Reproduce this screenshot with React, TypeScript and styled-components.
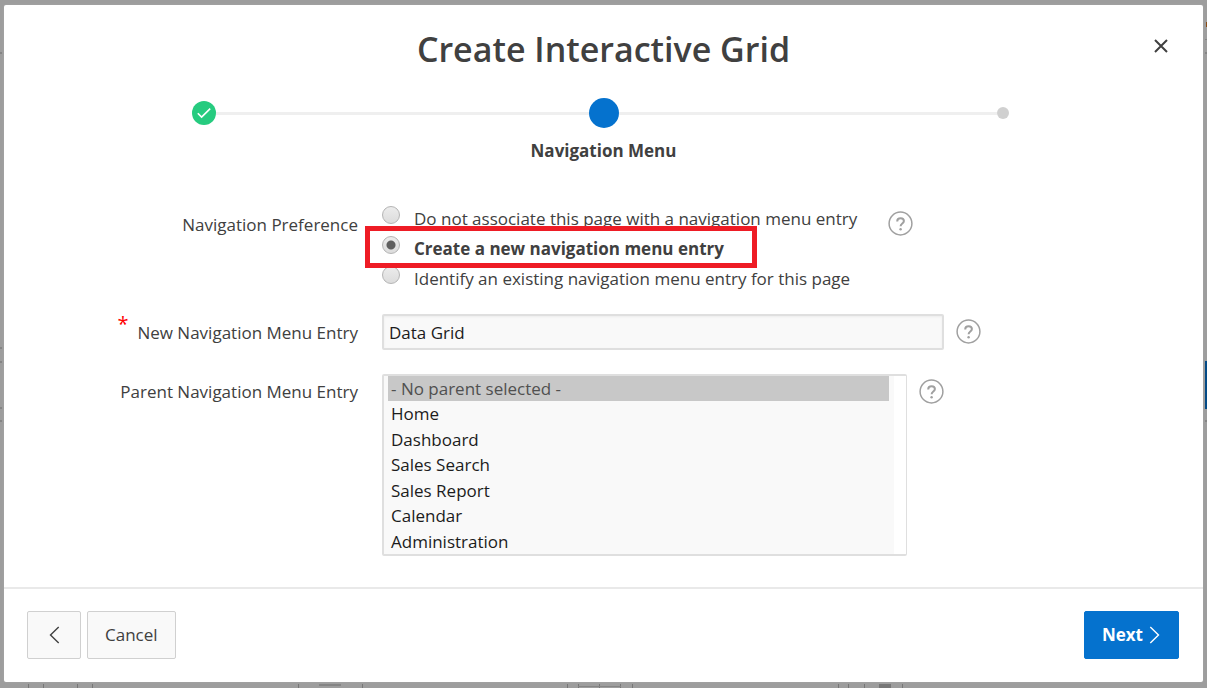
import React, { useState } from "react";
import styled, { createGlobalStyle, css } from "styled-components";

const GlobalStyle = createGlobalStyle`
  *, *::before, *::after { box-sizing: border-box; }
  body {
    margin: 0;
    background: #9d9d9d;
    color: #404040;
    font-family: "Open Sans", "Noto Sans", sans-serif;
    font-size: 17px;
    line-height: 24px;
  }
  button, input, select { font: inherit; color: inherit; }
`;

const Page = styled.div`
  position: relative;
  display: flex;
  min-height: 100vh;
  padding: 5px 4px 6px;
  overflow: hidden;
`;

const Mark = styled.span<{ $x: string; $y: string; $w: number; $h: number; $c?: string }>`
  position: absolute;
  ${(p) => p.$x};
  ${(p) => p.$y};
  width: ${(p) => p.$w}px;
  height: ${(p) => p.$h}px;
  background: ${(p) => p.$c ?? "#858585"};
`;

const Dialog = styled.section`
  position: relative;
  flex: 1;
  min-width: 0;
  display: flex;
  flex-direction: column;
  background: #fff;
  border-radius: 2px;
  box-shadow: 0 0 2px #aaa;
`;

const Header = styled.header`
  position: relative;
  padding: 20px 0 25px;
  text-align: center;
`;

const Title = styled.h1`
  margin: 0;
  font-size: 34px;
  line-height: 48px;
  font-weight: 600;
`;

const CloseButton = styled.button`
  position: absolute;
  top: 25px;
  right: 26px;
  width: 32px;
  height: 32px;
  padding: 0;
  display: grid;
  place-items: center;
  border: 0;
  background: none;
`;

const Steps = styled.ol`
  display: flex;
  margin: 0;
  padding: 0;
  list-style: none;
  text-align: center;
`;

const Step = styled.li`
  flex: 1;
`;

const Track = styled.div`
  display: flex;
  align-items: center;
  height: 30px;
  margin-bottom: 11px;
`;

const Line = styled.span<{ $hidden?: boolean }>`
  flex: 1;
  height: 3px;
  background: ${(p) => (p.$hidden ? "transparent" : "#efefef")};
`;

const dots = {
  done: css`width: 24px; height: 24px; background: #26cb7f;`,
  current: css`width: 30px; height: 30px; background: #0572ce;`,
  next: css`width: 12px; height: 12px; background: #d0d0d0;`,
};

const Dot = styled.span<{ $state: keyof typeof dots }>`
  display: grid;
  place-items: center;
  border-radius: 50%;
  ${(p) => dots[p.$state]}
`;

const StepName = styled.strong`
  display: block;
  font-weight: 700;
`;

const Form = styled.form`
  flex: 1;
  display: flex;
  flex-direction: column;
  gap: 24px;
  padding: 41px 24px 29px 0;
`;

const Field = styled.div`
  display: grid;
  grid-template-columns: minmax(0, 354px) minmax(0, 1fr);
  column-gap: 24px;
  align-items: start;
`;

const LabelCell = styled.div<{ $top?: number }>`
  padding-top: ${(p) => p.$top ?? 6}px;
  text-align: right;
`;

const Required = styled.span`
  position: relative;
  top: -8px;
  margin-right: 9px;
  color: #f00;
  font-size: 20px;
`;

const ControlCell = styled.div<{ $gap?: number }>`
  display: flex;
  align-items: flex-start;
  gap: ${(p) => p.$gap ?? 12}px;
`;

const HelpButton = styled.button<{ $top: number }>`
  flex: none;
  width: 25px;
  height: 25px;
  margin-top: ${(p) => p.$top}px;
  padding: 0;
  border: 0;
  background: none;
  svg { display: block; }
`;

const RadioGroup = styled.div`
  display: flex;
  flex-direction: column;
  gap: 4px;
`;

const RadioRow = styled.div`
  position: relative;
  display: flex;
  gap: 14px;
  height: 26px;
`;

const Radio = styled.input`
  appearance: none;
  flex: none;
  width: 18px;
  height: 18px;
  margin: 2px 0 0;
  border: 1px solid #b4b4b4;
  border-radius: 50%;
  background: linear-gradient(#ececec, #dcdcdc);
  &:checked {
    background: radial-gradient(circle, #606060 0 4px, transparent 5px), linear-gradient(#ececec, #dcdcdc);
  }
`;

const RadioLabel = styled.label<{ $bold: boolean }>`
  padding-top: 3px;
  white-space: nowrap;
  font-weight: ${(p) => (p.$bold ? 700 : 400)};
`;

const Highlight = styled.span`
  position: absolute;
  z-index: 1;
  top: -8px;
  left: -17px;
  width: 392px;
  height: 42px;
  border: 5px solid #ee1c25;
  pointer-events: none;
`;

const TextInput = styled.input`
  flex: 0 1 562px;
  min-width: 0;
  height: 36px;
  padding: 0 5px;
  border: 2px solid #dfdfdf;
  border-radius: 2px;
  background: #f9f9f9;
  box-shadow: inset 0 1px 2px #ececec;
  color: #1c1c1c;
  outline: 0;
`;

const ListBox = styled.select`
  flex: 0 1 525px;
  min-width: 0;
  height: 182px;
  padding: 0 17px 0 4px;
  border: 2px solid #dfdfdf;
  border-right-width: 1px;
  border-radius: 2px;
  background: linear-gradient(to left, #fff 12px, #f9f9f9 12px);
  color: #1c1c1c;
  outline: 0;
  overflow: hidden;
`;

const Option = styled.option`
  min-height: 25px;
  padding: 1px 3px 0;
  &:nth-child(even) {
    min-height: 26px;
  }
  &:checked {
    background: #c8c8c8 linear-gradient(#c8c8c8, #c8c8c8);
    color: #505050;
  }
`;

const Footer = styled.footer`
  display: flex;
  gap: 6px;
  padding: 22px 24px 23px 23px;
  border-top: 2px solid #e9e9e9;
`;

const Button = styled.button<{ $primary?: boolean }>`
  display: flex;
  align-items: center;
  gap: 6px;
  height: 48px;
  padding: 0 17px;
  border: 1px solid #d0d0d0;
  border-radius: 2px;
  background: #f9f9f9;
  white-space: nowrap;
  ${(p) =>
    p.$primary &&
    css`
      margin-left: auto;
      padding-right: 18px;
      border-color: #0572ce;
      background: #0572ce;
      color: #fff;
      font-weight: 700;
    `}
`;

const BackButton = styled(Button)`
  width: 54px;
  justify-content: center;
`;

function Help({ topic, top = 5 }: { topic: string; top?: number }) {
  return (
    <HelpButton type="button" $top={top} aria-label={`Help for ${topic}`}>
      <svg width="25" height="25" viewBox="0 0 25 25" fill="none" stroke="#a0a0a0">
        <circle cx="12.5" cy="12.5" r="11.4" strokeWidth="1.5" />
        <path d="M9.2 10.4c0-2.1 1.5-3.2 3.4-3.2s3.3 1.2 3.3 2.9c0 2.4-3.3 2.5-3.3 5.1" strokeWidth="2" />
        <circle cx="12.6" cy="18.3" r="1.2" fill="#a0a0a0" stroke="none" />
      </svg>
    </HelpButton>
  );
}

const preferences = [
  "Do not associate this page with a navigation menu entry",
  "Create a new navigation menu entry",
  "Identify an existing navigation menu entry for this page",
];

const parents = [
  "- No parent selected -",
  "Home",
  "Dashboard",
  "Sales Search",
  "Sales Report",
  "Calendar",
  "Administration",
];

const bottomMarks = [28, 43, 77, 92, 298, 362, 567, 578, 599, 620, 632, 838, 848, 864, 902];

export default function App() {
  const [preference, setPreference] = useState(1);
  const [entry, setEntry] = useState("Data Grid");
  const [parent, setParent] = useState(parents[0]);

  return (
    <>
      <GlobalStyle />
      <Page>
        {[52, 347, 361, 407, 420].map((y) => (
          <Mark key={y} $x="left: 0" $y={`top: ${y}px`} $w={2} $h={2} />
        ))}
        <Mark $x="right: 0" $y="top: 22px" $w={1} $h={5} $c="#8a4b12" />
        <Mark $x="right: 0" $y="top: 39px" $w={2} $h={1} />
        <Mark $x="right: 0" $y="top: 52px" $w={2} $h={2} />
        <Mark $x="right: 0" $y="top: 361px" $w={2} $h={48} $c="#034a86" />
        <Mark $x="right: 0" $y="top: 420px" $w={2} $h={2} />
        {bottomMarks.map((x) => (
          <Mark key={x} $x={`left: ${x}px`} $y="bottom: 0" $w={1} $h={4} $c="#777" />
        ))}
        <Mark $x="left: 319px" $y="bottom: 2px" $w={22} $h={2} />
        <Mark $x="left: 578px" $y="bottom: 1px" $w={43} $h={1} />
        <Mark $x="left: 879px" $y="bottom: 0" $w={12} $h={4} $c="#777" />
        <Dialog role="dialog" aria-labelledby="dialog-title">
          <Header>
            <Title id="dialog-title">Create Interactive Grid</Title>
            <CloseButton type="button" aria-label="Close">
              <svg width="14" height="14" viewBox="0 0 14 14" stroke="#404040" strokeWidth="2">
                <path d="M1 1l12 12M13 1L1 13" />
              </svg>
            </CloseButton>
          </Header>
          <Steps>
            <Step>
              <Track>
                <Line $hidden />
                <Dot $state="done">
                  <svg width="14" height="12" viewBox="0 0 14 12" fill="none" stroke="#fff" strokeWidth="1.6">
                    <path d="M.8 6.2l3.8 3.9L13.2 1.6" />
                  </svg>
                </Dot>
                <Line />
              </Track>
            </Step>
            <Step aria-current="step">
              <Track>
                <Line />
                <Dot $state="current" />
                <Line />
              </Track>
              <StepName>Navigation Menu</StepName>
            </Step>
            <Step>
              <Track>
                <Line />
                <Dot $state="next" />
                <Line $hidden />
              </Track>
            </Step>
          </Steps>
          <Form onSubmit={(e) => e.preventDefault()}>
            <Field role="radiogroup" aria-labelledby="preference-label">
              <LabelCell $top={9}>
                <span id="preference-label">Navigation Preference</span>
              </LabelCell>
              <ControlCell $gap={31}>
                <RadioGroup>
                  {preferences.map((text, i) => (
                    <RadioRow key={text}>
                      <Radio
                        type="radio"
                        id={`preference-${i}`}
                        name="preference"
                        checked={preference === i}
                        onChange={() => setPreference(i)}
                      />
                      <RadioLabel htmlFor={`preference-${i}`} $bold={preference === i}>
                        {text}
                      </RadioLabel>
                      {i === 1 && <Highlight />}
                    </RadioRow>
                  ))}
                </RadioGroup>
                <Help topic="Navigation Preference" top={7} />
              </ControlCell>
            </Field>
            <Field>
              <LabelCell>
                <Required aria-hidden="true">*</Required>
                <label htmlFor="entry">New Navigation Menu Entry</label>
              </LabelCell>
              <ControlCell>
                <TextInput id="entry" required value={entry} onChange={(e) => setEntry(e.target.value)} />
                <Help topic="New Navigation Menu Entry" />
              </ControlCell>
            </Field>
            <Field>
              <LabelCell>
                <label htmlFor="parent">Parent Navigation Menu Entry</label>
              </LabelCell>
              <ControlCell>
                <ListBox id="parent" size={7} value={parent} onChange={(e) => setParent(e.target.value)}>
                  {parents.map((p) => (
                    <Option key={p}>{p}</Option>
                  ))}
                </ListBox>
                <Help topic="Parent Navigation Menu Entry" />
              </ControlCell>
            </Field>
          </Form>
          <Footer>
            <BackButton type="button" aria-label="Back">
              <svg width="11" height="18" viewBox="0 0 11 18" fill="none" stroke="#404040" strokeWidth="1.4">
                <path d="M9.7 1L1.5 9l8.2 8" />
              </svg>
            </BackButton>
            <Button type="button">Cancel</Button>
            <Button type="button" $primary>
              Next
              <svg width="11" height="18" viewBox="0 0 11 18" fill="none" stroke="#fff" strokeWidth="1.4">
                <path d="M1.3 1l8.2 8-8.2 8" />
              </svg>
            </Button>
          </Footer>
        </Dialog>
      </Page>
    </>
  );
}
